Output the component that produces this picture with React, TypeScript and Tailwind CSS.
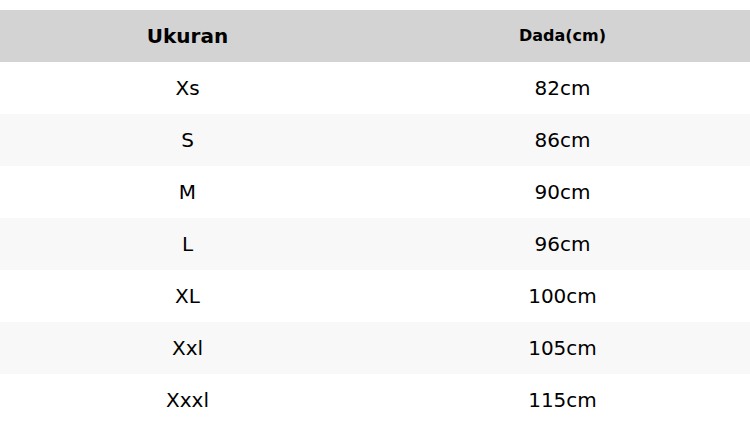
const rows = [
  ["Xs", "82cm"],
  ["S", "86cm"],
  ["M", "90cm"],
  ["L", "96cm"],
  ["XL", "100cm"],
  ["Xxl", "105cm"],
  ["Xxxl", "115cm"],
];

export default function App() {
  return (
    <div className="w-[750px] h-[426px] bg-white pt-[10px] font-['DejaVu_Sans',sans-serif] text-black overflow-hidden">
      <table className="w-full border-collapse table-fixed">
        <thead>
          <tr className="bg-[#d3d3d3] h-[52px]">
            <th className="text-[20px] font-bold">Ukuran</th>
            <th className="text-[16px] font-bold">Dada(cm)</th>
          </tr>
        </thead>
        <tbody>
          {rows.map(([size, chest], i) => (
            <tr key={size} className={`h-[52px] ${i % 2 === 1 ? "bg-[#f8f8f8]" : "bg-white"}`}>
              <td className="text-center text-[20px]">{size}</td>
              <td className="text-center text-[20px]">{chest}</td>
            </tr>
          ))}
        </tbody>
      </table>
    </div>
  );
}
